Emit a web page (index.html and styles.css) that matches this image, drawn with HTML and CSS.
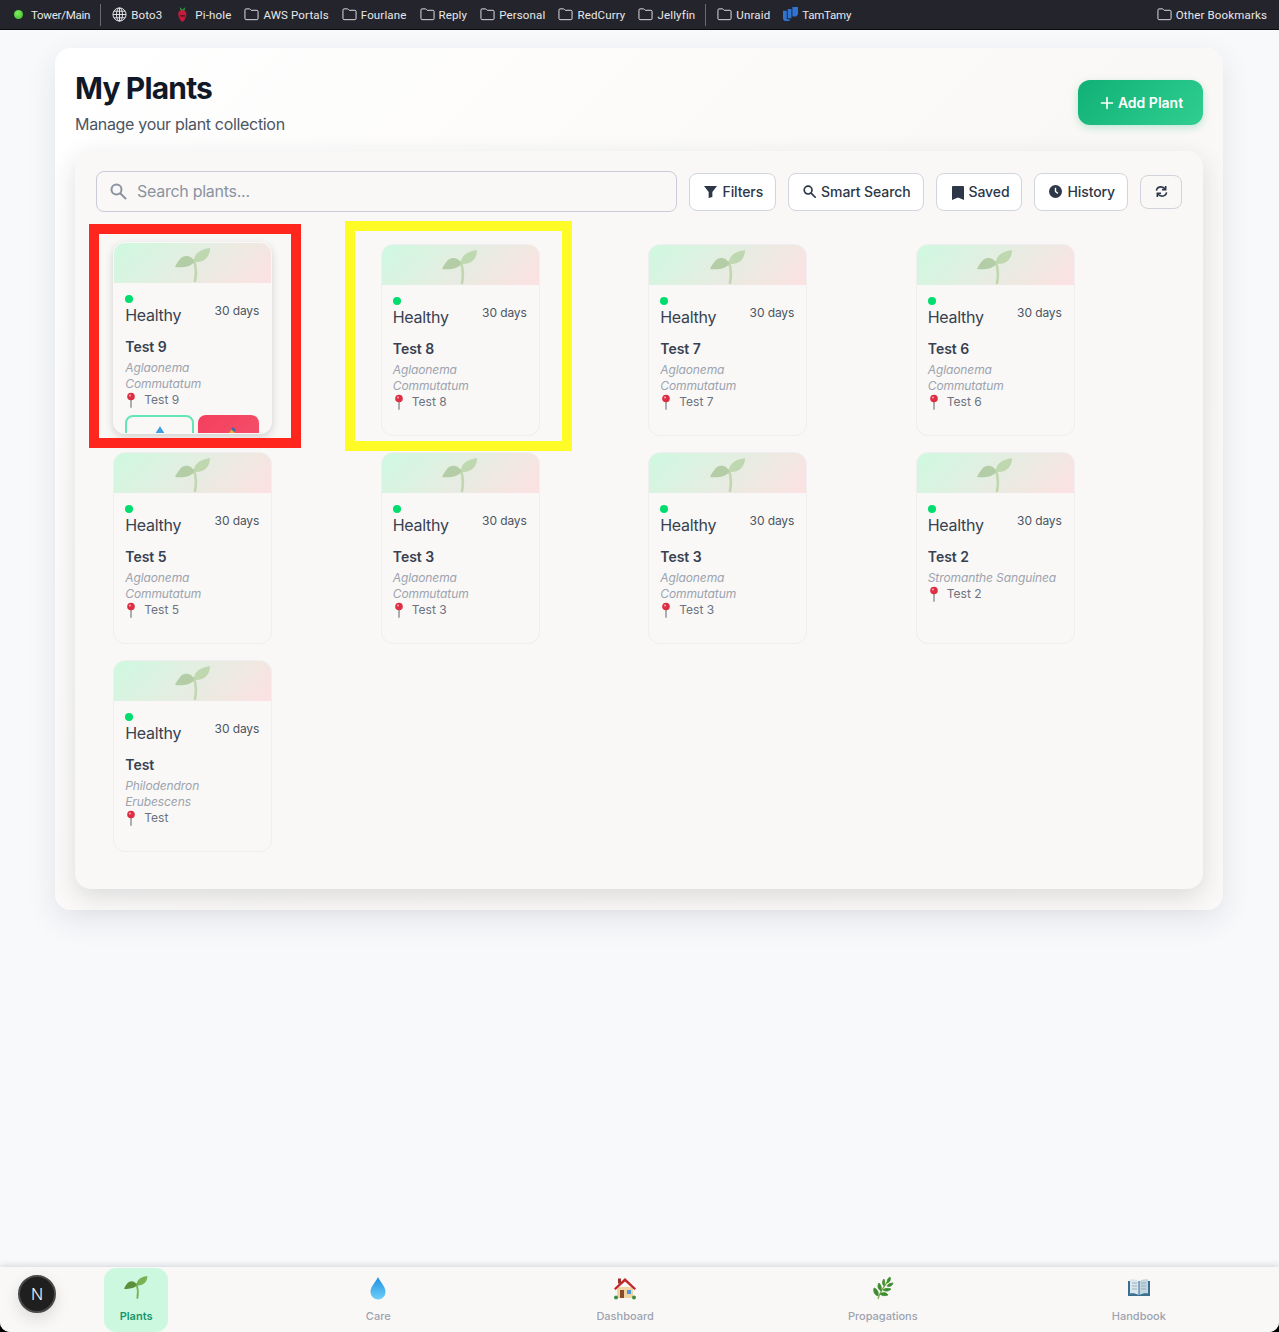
FILE: index.html
```html
<!DOCTYPE html>
<html lang="en">

<head>
    <meta charset="UTF-8">
    <meta name="viewport" content="width=device-width, initial-scale=1.0">
    <title>My Plants</title>
    <link rel="stylesheet" href="styles.css">
</head>

<body>
    <svg class="defs" width="0" height="0">
        <symbol id="folder" viewBox="0 0 16 14">
            <path d="M1 3V2.200C1 1.500 1.500 1 2.200 1h3.500c.4 0 .7.2 1 .5l1 1h6.100c.7 0 1.200.5 1.200 1.200v7.600c0 .7-.5 1.200-1.200 1.200H2.200c-.7 0-1.200-.5-1.200-1.200z" fill="none" stroke="#e8e8ea" stroke-width="1" />
        </symbol>
        <symbol id="seedling" viewBox="0 0 36 36">
            <path d="M19 12c2 7 2.500 14 1 21" fill="none" stroke="#77b255" stroke-width="2.600" stroke-linecap="round" />
            <path d="M19.500 14C17 7 9 6 5 11c-2 2.500-3.500 5-5 8 7 1 15 0 19.500-5z" fill="#5c913b" />
            <path d="M19 14c-.5-7 4-12 16-14 0 7-4 15-16 14z" fill="#77b255" />
        </symbol>
        <symbol id="pin" viewBox="0 0 12 16">
            <rect x="5.300" y="7" width="1.400" height="9" rx=".7" fill="#8a8f94" />
            <circle cx="6" cy="4.500" r="3.800" fill="#dd2e44" />
            <circle cx="5" cy="3.500" r="1.100" fill="#f4a0aa" />
        </symbol>
    </svg>

    <nav class="bookmarks">
        <a class="mark tight"><span class="green-dot"></span>Tower/Main</a>
        <span class="sep"></span>
        <a class="mark">
            <svg class="mark-icon" viewBox="0 0 16 16" fill="none" stroke="#e8e8ea" stroke-width="1">
                <circle cx="8" cy="8" r="7" />
                <ellipse cx="8" cy="8" rx="3.200" ry="7" />
                <path d="M8 1v14M1 8h14M2 4.500h12M2 11.500h12" />
            </svg>Boto3
        </a>
        <a class="mark pihole">
            <svg class="mark-icon" viewBox="0 0 12 16">
                <path d="M3 0l3 3 3-3-1 4H4z" fill="#2f9e44" />
                <path d="M6 3.500c3 0 4.500 2 4 5S8 15.500 6 15.500 2 11.500 1.500 8.500s1-5 4.500-5z" fill="#c51a3a" />
                <path d="M3.500 9.500h5" stroke="#111" stroke-width="1" />
            </svg>Pi-hole
        </a>
        <a class="mark"><svg class="mark-icon"><use href="#folder" /></svg>AWS Portals</a>
        <a class="mark"><svg class="mark-icon"><use href="#folder" /></svg>Fourlane</a>
        <a class="mark"><svg class="mark-icon"><use href="#folder" /></svg>Reply</a>
        <a class="mark"><svg class="mark-icon"><use href="#folder" /></svg>Personal</a>
        <a class="mark"><svg class="mark-icon"><use href="#folder" /></svg>RedCurry</a>
        <a class="mark"><svg class="mark-icon"><use href="#folder" /></svg>Jellyfin</a>
        <span class="sep"></span>
        <a class="mark"><svg class="mark-icon"><use href="#folder" /></svg>Unraid</a>
        <a class="mark tight">
            <svg class="mark-icon" viewBox="0 0 16 16" fill="#2f74d0">
                <path d="M0 4h4v9h3v2H2l-2-2zM5 2h4v10H5zM10 0h6v8l-2 2h-4z" />
            </svg>TamTamy
        </a>
        <a class="mark other"><svg class="mark-icon"><use href="#folder" /></svg>Other Bookmarks</a>
    </nav>

    <main class="page">
        <header class="page-head">
            <div>
                <h1>My Plants</h1>
                <p>Manage your plant collection</p>
            </div>
            <button class="add-btn">
                <svg viewBox="0 0 14 14" width="14" height="14" fill="none" stroke="#fff" stroke-width="1.600" stroke-linecap="round">
                    <path d="M7 1.500v11M1.500 7h11" />
                </svg>Add Plant
            </button>
        </header>

        <section class="panel">
            <div class="toolbar">
                <div class="search">
                    <svg viewBox="0 0 18 18" width="18" height="18" fill="none" stroke="#8b93a1" stroke-width="2" stroke-linecap="round">
                        <circle cx="7.500" cy="7.500" r="5" />
                        <path d="M11.500 11.500l5 5" />
                    </svg>
                    <span>Search plants...</span>
                </div>
                <button class="tool-btn">
                    <svg viewBox="0 0 14 14" width="13" height="13" fill="#2d3748"><path d="M0 1h14L9 7.500V13l-4 1V7.500z" /></svg>Filters
                </button>
                <button class="tool-btn">
                    <svg viewBox="0 0 14 14" width="13" height="13" fill="none" stroke="#2d3748" stroke-width="1.800" stroke-linecap="round"><circle cx="5.500" cy="5.500" r="4.200" /><path d="M9 9l4.200 4.200" /></svg>Smart Search
                </button>
                <button class="tool-btn saved">
                    <svg viewBox="0 0 12 14" width="12" height="14" fill="#2d3748"><path d="M0 1.200C0 .5.500 0 1.200 0h9.600c.7 0 1.200.5 1.200 1.200V14l-6-2.500L0 14z" /></svg>Saved
                </button>
                <button class="tool-btn">
                    <svg viewBox="0 0 14 14" width="13" height="13"><circle cx="7" cy="7" r="7" fill="#2d3748" /><path d="M7 3v4l2.500 2" fill="none" stroke="#fff" stroke-width="1.500" /></svg>History
                </button>
                <button class="refresh-btn">
                    <svg viewBox="0 0 14 14" width="13" height="13" fill="none" stroke="#2d3748" stroke-width="1.700">
                        <path d="M1.500 6C2 3.500 4.200 2 6.500 2c2 0 3.500 1 4.500 2.500M12.500 8c-.5 2.500-2.700 4-5 4-2 0-3.500-1-4.500-2.500" />
                        <path d="M11.500 1v4h-4M2.500 13V9h4" />
                    </svg>
                </button>
            </div>

            <div class="plant-grid">
                <article class="plant-card hovered">
                    <div class="card-top"><svg class="sprout"><use href="#seedling" /></svg></div>
                    <div class="card-body">
                        <div class="status-row"><div class="status"><i class="dot"></i>Healthy</div><span class="age">30 days</span></div>
                        <h3>Test 9</h3>
                        <p class="species">Aglaonema Commutatum</p>
                        <p class="place"><svg class="pin"><use href="#pin" /></svg>Test 9</p>
                        <div class="card-actions">
                            <button class="water-btn">
                                <svg viewBox="0 0 12 16" width="12" height="16"><path d="M6 0c2 4 5 6.500 5 10a5 5 0 0 1-10 0C1 6.500 4 4 6 0z" fill="#3b9fe0" /></svg>
                            </button>
                            <button class="care-btn">
                                <svg viewBox="0 0 14 16" width="14" height="16"><path d="M2 14L10 3l3 3-9 9z" fill="#e3b341" /><path d="M9 3l2-2 3 3-2 2z" fill="#3a6ea5" /></svg>
                            </button>
                        </div>
                    </div>
                </article>
                <article class="plant-card">
                    <div class="card-top"><svg class="sprout"><use href="#seedling" /></svg></div>
                    <div class="card-body">
                        <div class="status-row"><div class="status"><i class="dot"></i>Healthy</div><span class="age">30 days</span></div>
                        <h3>Test 8</h3>
                        <p class="species">Aglaonema Commutatum</p>
                        <p class="place"><svg class="pin"><use href="#pin" /></svg>Test 8</p>
                    </div>
                </article>
                <article class="plant-card">
                    <div class="card-top"><svg class="sprout"><use href="#seedling" /></svg></div>
                    <div class="card-body">
                        <div class="status-row"><div class="status"><i class="dot"></i>Healthy</div><span class="age">30 days</span></div>
                        <h3>Test 7</h3>
                        <p class="species">Aglaonema Commutatum</p>
                        <p class="place"><svg class="pin"><use href="#pin" /></svg>Test 7</p>
                    </div>
                </article>
                <article class="plant-card">
                    <div class="card-top"><svg class="sprout"><use href="#seedling" /></svg></div>
                    <div class="card-body">
                        <div class="status-row"><div class="status"><i class="dot"></i>Healthy</div><span class="age">30 days</span></div>
                        <h3>Test 6</h3>
                        <p class="species">Aglaonema Commutatum</p>
                        <p class="place"><svg class="pin"><use href="#pin" /></svg>Test 6</p>
                    </div>
                </article>
                <article class="plant-card">
                    <div class="card-top"><svg class="sprout"><use href="#seedling" /></svg></div>
                    <div class="card-body">
                        <div class="status-row"><div class="status"><i class="dot"></i>Healthy</div><span class="age">30 days</span></div>
                        <h3>Test 5</h3>
                        <p class="species">Aglaonema Commutatum</p>
                        <p class="place"><svg class="pin"><use href="#pin" /></svg>Test 5</p>
                    </div>
                </article>
                <article class="plant-card">
                    <div class="card-top"><svg class="sprout"><use href="#seedling" /></svg></div>
                    <div class="card-body">
                        <div class="status-row"><div class="status"><i class="dot"></i>Healthy</div><span class="age">30 days</span></div>
                        <h3>Test 3</h3>
                        <p class="species">Aglaonema Commutatum</p>
                        <p class="place"><svg class="pin"><use href="#pin" /></svg>Test 3</p>
                    </div>
                </article>
                <article class="plant-card">
                    <div class="card-top"><svg class="sprout"><use href="#seedling" /></svg></div>
                    <div class="card-body">
                        <div class="status-row"><div class="status"><i class="dot"></i>Healthy</div><span class="age">30 days</span></div>
                        <h3>Test 3</h3>
                        <p class="species">Aglaonema Commutatum</p>
                        <p class="place"><svg class="pin"><use href="#pin" /></svg>Test 3</p>
                    </div>
                </article>
                <article class="plant-card">
                    <div class="card-top"><svg class="sprout"><use href="#seedling" /></svg></div>
                    <div class="card-body">
                        <div class="status-row"><div class="status"><i class="dot"></i>Healthy</div><span class="age">30 days</span></div>
                        <h3>Test 2</h3>
                        <p class="species">Stromanthe Sanguinea</p>
                        <p class="place"><svg class="pin"><use href="#pin" /></svg>Test 2</p>
                    </div>
                </article>
                <article class="plant-card">
                    <div class="card-top"><svg class="sprout"><use href="#seedling" /></svg></div>
                    <div class="card-body">
                        <div class="status-row"><div class="status"><i class="dot"></i>Healthy</div><span class="age">30 days</span></div>
                        <h3>Test</h3>
                        <p class="species">Philodendron Erubescens</p>
                        <p class="place"><svg class="pin"><use href="#pin" /></svg>Test</p>
                    </div>
                </article>
            </div>
        </section>
    </main>

    <div class="frame frame-red"></div>
    <div class="frame frame-yellow"></div>

    <nav class="tabbar">
        <a class="tab active"><svg class="tab-icon"><use href="#seedling" /></svg>Plants</a>
        <a class="tab">
            <svg class="tab-icon" viewBox="0 0 24 24">
                <defs>
                    <linearGradient id="drop" x1="0" y1="0" x2="0" y2="1">
                        <stop offset="0" stop-color="#1d8fe0" />
                        <stop offset="1" stop-color="#6fd0f7" />
                    </linearGradient>
                </defs>
                <path d="M12 1c2 5 7.500 9 7.500 15a7.500 7.500 0 0 1-15 0C4.500 10 10 6 12 1z" fill="url(#drop)" />
            </svg>Care
        </a>
        <a class="tab">
            <svg class="tab-icon" viewBox="0 0 24 24">
                <rect x="4" y="11" width="16" height="11" fill="#f0d3a3" />
                <path d="M12 2L1 12.500l1.500 1.500L12 5.500 21.500 14l1.500-1.500z" fill="#c1272d" />
                <rect x="5" y="2.500" width="3" height="5" fill="#a0312a" />
                <rect x="7" y="14" width="4" height="8" fill="#8a4b2a" />
                <rect x="14" y="14" width="4" height="4" fill="#4a9ad9" />
                <circle cx="3" cy="21.500" r="2" fill="#3e8e41" />
                <circle cx="21" cy="21.500" r="2" fill="#3e8e41" />
            </svg>Dashboard
        </a>
        <a class="tab">
            <svg class="tab-icon" viewBox="0 0 24 24" fill="#3e8e2f" stroke="#3e8e2f" stroke-width=".8">
                <path d="M7 23c2-7 6-13 11-19" fill="none" stroke="#7aa84c" stroke-width="1.200" />
                <path d="M19 1c1 3 0 5-3 6 0-3 1-5 3-6zM13 3c1 3 1 5 0 7-2-2-2-5 0-7zM22 7c-1 3-3 4-6 3 1-2 3-3 6-3zM8 7c2 2 3 5 2 8-3-2-4-5-2-8zM20 13c-2 2-5 3-8 1 2-2 5-2 8-1zM3 12c3 1 5 4 4 8-3-1-5-4-4-8zM17 19c-3 1-6 1-8-1 3-2 6-2 8 1z" />
            </svg>Propagations
        </a>
        <a class="tab">
            <svg class="tab-icon" viewBox="0 0 24 24">
                <path d="M1 5h22v15H1z" fill="#3b6f8f" />
                <path d="M3 3.500c3-.5 6 0 8.500 1.500v14c-2.500-1.500-5.500-2-8.500-1.500z" fill="#d9e6ee" />
                <path d="M21 3.500c-3-.5-6 0-8.500 1.500v14c2.500-1.500 5.500-2 8.500-1.500z" fill="#c3d5df" />
                <path d="M5 7h5M5 10h5M5 13h5M14 7h5M14 10h5M14 13h5" stroke="#8fa5b2" stroke-width=".8" />
            </svg>Handbook
        </a>
    </nav>
    <div class="next-badge">N</div>
</body>

</html>
```

FILE: styles.css
```css
* {
    box-sizing: border-box;
}

html {
    background: #000;
}

body {
    margin: 0;
    height: 1332px;
    overflow: hidden;
    display: flex;
    flex-direction: column;
    border-radius: 0 0 10px 10px;
    background: #f8f9fb;
    font-family: "Inter", "Liberation Sans", sans-serif;
    color: #374151;
    position: relative;
}

.defs {
    position: absolute;
}

p,
h1,
h3 {
    margin: 0;
}

button {
    font-family: inherit;
    cursor: pointer;
}

/* bookmarks bar */
.bookmarks {
    height: 30px;
    flex: none;
    display: flex;
    align-items: center;
    gap: 13px;
    padding: 0 12px 0 14px;
    background: #24242c;
    border-bottom: 1px solid #0c0c0e;
    font-family: "Roboto", "Liberation Sans", sans-serif;
    font-size: 11.500px;
    letter-spacing: 0.15px;
    color: #e8e8ea;
}

.mark {
    display: flex;
    align-items: center;
    gap: 4px;
    white-space: nowrap;
}

.mark.tight {
    letter-spacing: -0.25px;
}

.pihole svg {
    margin-right: 1px;
}

.mark-icon {
    width: 15px;
    height: 15px;
}

.green-dot {
    width: 9px;
    height: 9px;
    margin-right: 4px;
    border-radius: 50%;
    background: radial-gradient(circle at 40% 35%, #7cf05c, #3cb52d);
}

.sep {
    width: 1px;
    height: 22px;
    margin: 0 -2px 0 -3px;
    background: #6a6a70;
}

.other {
    margin-left: auto;
}

/* page */
.page {
    width: 1168px;
    height: 862px;
    margin: 18px 0 0 55px;
    padding: 20px;
    border-radius: 16px;
    background: linear-gradient(135deg, #fff 0%, #faf8f6 55%, #fbf9f7 100%);
    box-shadow: 0 10px 30px rgba(30, 41, 59, 0.1);
}

.page-head {
    height: 83px;
    display: flex;
    justify-content: space-between;
    align-items: flex-start;
}

h1 {
    margin-top: 2px;
    font-size: 30px;
    line-height: 36px;
    font-weight: 700;
    letter-spacing: -0.85px;
    color: #111827;
}

.page-head p {
    margin-top: 6px;
    font-size: 16px;
    line-height: 24px;
    letter-spacing: -0.32px;
    color: #4b5563;
}

.add-btn {
    width: 125px;
    height: 45px;
    margin-top: 12px;
    display: flex;
    align-items: center;
    justify-content: center;
    gap: 4px;
    padding: 0 0 0 2px;
    border: none;
    border-radius: 12px;
    background: linear-gradient(135deg, #10b077, #30cf90);
    box-shadow: 0 3px 8px rgba(16, 176, 119, 0.25);
    color: #fff;
    font-size: 14px;
    font-weight: 600;
}

.panel {
    height: 738px;
    padding: 20px 21px;
    border-radius: 16px;
    background: #f9f8f6;
    box-shadow: 0 8px 24px rgba(30, 41, 59, 0.14);
}

.toolbar {
    display: flex;
    align-items: center;
    gap: 12px;
}

.search {
    flex: 1;
    min-width: 0;
    height: 41px;
    display: flex;
    align-items: center;
    gap: 10px;
    padding: 0 0 2px 12px;
    border: 1px solid #c9ccd8;
    border-radius: 8px;
    font-size: 16px;
    letter-spacing: -0.27px;
    color: #8b93a1;
}

.tool-btn {
    flex: none;
    height: 38px;
    display: flex;
    align-items: center;
    gap: 5px;
    padding: 0 12px 0 14px;
    border: 1px solid #d1d4de;
    border-radius: 8px;
    background: #fff;
    color: #2d3748;
    font-size: 14px;
    font-weight: 500;
    letter-spacing: -0.1px;
    white-space: nowrap;
}

.saved {
    padding-left: 15px;
}

.saved svg {
    margin-top: 3px;
}

.refresh-btn {
    flex: none;
    width: 42px;
    height: 34px;
    display: flex;
    align-items: center;
    justify-content: center;
    border: 1px solid #d1d4de;
    border-radius: 8px;
    background: transparent;
}

/* plant cards */
.plant-grid {
    display: grid;
    grid-template-columns: repeat(4, 159px);
    grid-auto-rows: 192px;
    column-gap: 108.500px;
    row-gap: 16px;
    margin: 32px 0 0 17.250px;
}

.plant-card {
    overflow: hidden;
    border: 1px solid #f0eeee;
    border-radius: 12px;
    background: #f9f8f6;
}

.plant-card.hovered {
    transform: translateY(-2px);
    border-color: transparent;
    box-shadow: 0 3px 8px rgba(0, 0, 0, 0.16);
}

.card-top {
    height: 40px;
    overflow: hidden;
    display: flex;
    justify-content: center;
    padding-top: 5px;
    background: linear-gradient(135deg, #cef9e1, #fde1e2);
}

.sprout {
    width: 36px;
    height: 36px;
    flex: none;
    opacity: 0.35;
}

.card-body {
    padding: 12px 12px 10px 11px;
}

.status-row {
    height: 34px;
    display: flex;
    justify-content: space-between;
    align-items: flex-start;
}

.status {
    font-size: 16px;
    line-height: 24px;
    letter-spacing: -0.3px;
    color: #374151;
}

.dot {
    display: block;
    width: 8px;
    height: 8px;
    border-radius: 50%;
    background: #00dc6e;
}

.age {
    margin-top: 8px;
    font-size: 12px;
    line-height: 16px;
    letter-spacing: -0.1px;
    color: #4b5563;
}

h3 {
    margin-top: 8px;
    font-size: 14px;
    line-height: 20px;
    font-weight: 600;
    color: #374151;
}

.species {
    margin-top: 3px;
    font-size: 12px;
    line-height: 16px;
    font-style: italic;
    letter-spacing: -0.1px;
    color: #9ca3af;
}

.place {
    display: flex;
    align-items: center;
    gap: 7px;
    font-size: 12px;
    line-height: 16px;
    color: #6b7280;
}

.pin {
    width: 12px;
    height: 16px;
}

.card-actions {
    display: flex;
    gap: 4px;
    margin-top: 7px;
}

.water-btn,
.care-btn {
    height: 34px;
    padding: 6px 0 0;
    border-radius: 8px;
    text-align: center;
}

.water-btn {
    width: 69px;
    border: 2px solid #63e6b4;
    background: transparent;
}

.care-btn {
    width: 61px;
    border: none;
    background: linear-gradient(135deg, #f43f5e, #f4516c);
}

/* pasted-on marks, they sit over the grid */
.frame {
    position: absolute;
    border-width: 10px;
    border-style: solid;
    pointer-events: none;
}

.frame-red {
    left: 89px;
    top: 224px;
    width: 212px;
    height: 224px;
    border-color: #ff261d;
}

.frame-yellow {
    left: 345px;
    top: 221px;
    width: 227px;
    height: 230px;
    border-color: #fffb27;
}

/* bottom nav */
.tabbar {
    margin-top: auto;
    height: 65px;
    flex: none;
    display: flex;
    justify-content: space-around;
    align-items: flex-end;
    padding: 0 16px 0 15px;
    background: #faf8f6;
    box-shadow: 0 -2px 6px rgba(30, 41, 59, 0.14);
}

.tab {
    min-width: 64px;
    height: 64px;
    display: flex;
    flex-direction: column;
    align-items: center;
    gap: 8px;
    padding: 8px 8px 0;
    border-radius: 12px;
    font-size: 11px;
    font-weight: 500;
    line-height: 16px;
    color: #9ca3af;
}

.tab.active {
    background: #cdf8e0;
    color: #15966a;
    font-weight: 600;
}

.tab-icon {
    width: 24px;
    height: 24px;
    flex: none;
}

.next-badge {
    position: absolute;
    left: 18px;
    top: 1275px;
    width: 38px;
    height: 38px;
    display: flex;
    align-items: center;
    justify-content: center;
    border: 2px solid #4a4a4a;
    border-radius: 50%;
    background: #1f1f1f;
    color: #f4f4f4;
    font-size: 16px;
    font-weight: 300;
    box-shadow: 0 6px 16px rgba(0, 0, 0, 0.12);
}
```
